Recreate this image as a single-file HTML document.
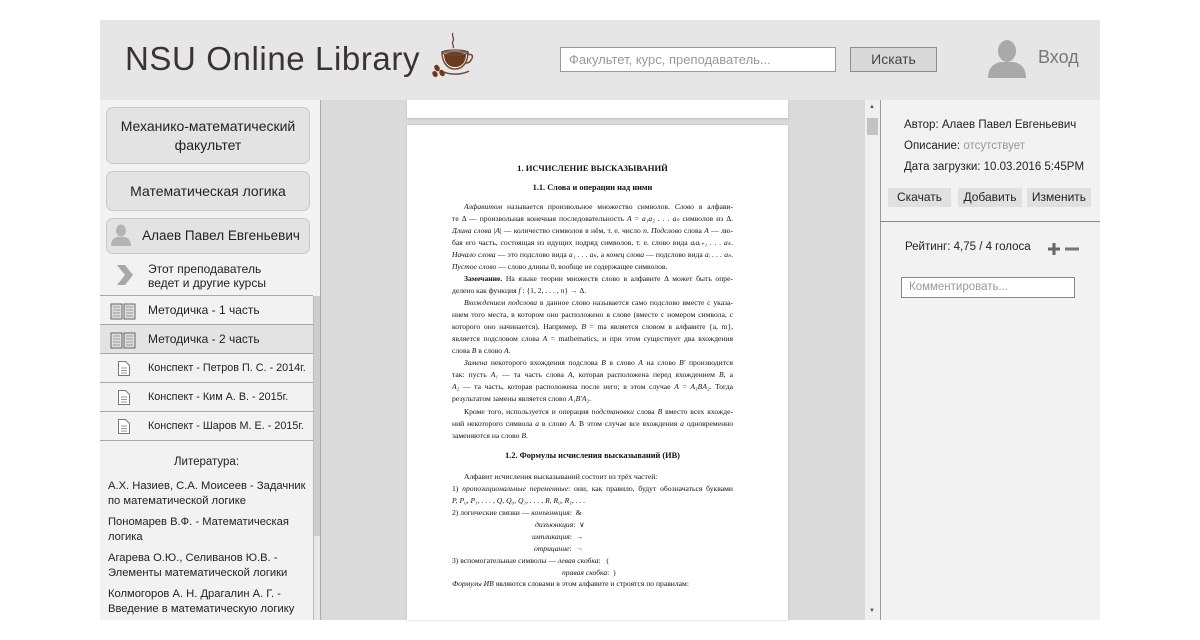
<!DOCTYPE html>
<html><head><meta charset="utf-8">
<style>
*{margin:0;padding:0;box-sizing:border-box}
body{width:1200px;height:640px;background:#fff;position:relative;overflow:hidden;font-family:"Liberation Sans","DejaVu Sans",sans-serif;color:#222}
.a{position:absolute}
#hdr{left:100px;top:20px;width:1000px;height:80px;background:#e6e6e6}
.btn{position:absolute;left:106px;width:204px;background:#e3e3e3;border:1px solid #c8c8c8;border-radius:7px;text-align:center;font-size:14px;color:#222}
.li{position:absolute;left:100px;width:213px;height:29px;border-bottom:1px solid #a8a8a8;background:#f2f2f2}
.dl{position:absolute;left:452px;width:281px;font-family:"Liberation Serif",serif;font-size:7.6px;color:#111;white-space:nowrap;line-height:10px;height:10px;overflow:hidden}
.j{text-align:justify;text-align-last:justify}
.rb{position:absolute;top:188px;height:19px;background:#e0e0e0;font-size:12px;line-height:19px;text-align:center;color:#222}
</style></head><body>
<div class="a" id="hdr"></div>
<div class="a" style="left:125px;top:37px;font-size:33px;color:#3b3333;letter-spacing:0.6px;line-height:44px">NSU Online Library</div>
<svg class="a" style="left:430px;top:30px" width="50" height="50" viewBox="0 0 50 50">
<path d="M23 3c-2 3 2 5 0 8s2 5 0 7" stroke="#6b4a35" stroke-width="1.3" fill="none"/>
<path d="M12 22c0 10 5 17 13 17s13-7 13-17z" fill="#fff" stroke="#6b4a35" stroke-width="1.5"/>
<path d="M14 24c0 8 4 13 11 13s11-5 11-13c-5-2-17-2-22 0z" fill="#6b3a1e"/>
<ellipse cx="25" cy="22.5" rx="13" ry="2.5" fill="none" stroke="#6b4a35" stroke-width="1.3"/>
<path d="M37 25c5-2 7 1 4 5-1 2-3 3-5 3" stroke="#6b4a35" stroke-width="1.5" fill="none"/>
<path d="M14 42c6 3 18 3 25-1" stroke="#6b4a35" stroke-width="1.5" fill="none"/>
<ellipse cx="7" cy="38" rx="2.5" ry="3.5" fill="#6b3a1e" transform="rotate(-30 7 38)"/>
<ellipse cx="12" cy="43" rx="2.5" ry="3.5" fill="#6b3a1e" transform="rotate(-30 12 43)"/>
<ellipse cx="5" cy="44" rx="2.5" ry="3.2" fill="#6b3a1e" transform="rotate(-30 5 44)"/>
</svg>
<div class="a" style="left:560px;top:47px;width:276px;height:25px;background:#fff;border:1px solid #9a9a9a;font-size:13px;color:#999;line-height:23px;padding-left:8px">Факультет, курс, преподаватель...</div>
<div class="a" style="left:850px;top:47px;width:87px;height:25px;background:#d9d9d9;border:1px solid #8e8e8e;font-size:14px;color:#444;line-height:23px;text-align:center">Искать</div>
<svg class="a" style="left:987px;top:38px" width="40" height="40" viewBox="0 0 40 40"><ellipse cx="20" cy="13" rx="9" ry="11" fill="#a9a9a9"/><path d="M1 40c0-10 5-14 12-16h14c7 2 12 6 12 16z" fill="#a9a9a9"/></svg>
<div class="a" style="left:1038px;top:47px;font-size:18px;color:#777">Вход</div>

<div class="a" style="left:100px;top:100px;width:220px;height:520px;background:#f2f2f2"></div>
<div class="btn" style="top:107px;height:57px;padding-top:9px;line-height:19px">Механико-математический<br>факультет</div>
<div class="btn" style="top:171px;height:40px;line-height:38px">Математическая логика</div>
<div class="btn" style="top:218px;height:36px;line-height:34px;padding-left:26px;font-size:13.5px">Алаев Павел Евгеньевич</div>
<svg class="a" style="left:111px;top:224px" width="20" height="22" viewBox="0 0 20 22"><ellipse cx="10" cy="6.5" rx="5" ry="6" fill="#b3b3b3"/><path d="M0 22c0-6 3-8 6-9h8c3 1 6 3 6 9z" fill="#b3b3b3"/></svg>
<svg class="a" style="left:115px;top:264px" width="20" height="22" viewBox="0 0 20 22"><path d="M2 1h8l8 10-8 10H2l8-10z" fill="#a8a8a8"/></svg>
<div class="a" style="left:148px;top:262px;font-size:12px;line-height:14px">Этот преподаватель<br>ведет и другие курсы</div>
<div class="a" style="left:100px;top:295px;width:213px;height:1px;background:#a8a8a8"></div>
<div class="li" style="top:296px"></div>
<div class="li" style="top:325px;background:#e3e3e3"></div>
<div class="li" style="top:354px"></div>
<div class="li" style="top:383px"></div>
<div class="li" style="top:412px"></div>
<div class="a" style="left:148px;top:302px;font-size:12px;line-height:16px">Методичка - 1 часть</div>
<div class="a" style="left:148px;top:331px;font-size:12px;line-height:16px">Методичка - 2 часть</div>
<div class="a" style="left:148px;top:360px;font-size:10.8px;line-height:16px">Конспект - Петров П. С. - 2014г.</div>
<div class="a" style="left:148px;top:389px;font-size:10.8px;line-height:16px">Конспект - Ким А. В. - 2015г.</div>
<div class="a" style="left:148px;top:418px;font-size:10.8px;line-height:16px">Конспект - Шаров М. Е. - 2015г.</div>
<svg class="a" style="left:110px;top:302px" width="26" height="18" viewBox="0 0 26 18"><g fill="#ddd" stroke="#666" stroke-width="1"><path d="M1 2h11v15H1zM14 2h11v15H14z"/></g><path d="M3 5h7M3 8h7M3 11h7M3 14h7M16 5h7M16 8h7M16 11h7M16 14h7" stroke="#999" stroke-width="1"/></svg>
<svg class="a" style="left:110px;top:331px" width="26" height="18" viewBox="0 0 26 18"><g fill="#ddd" stroke="#666" stroke-width="1"><path d="M1 2h11v15H1zM14 2h11v15H14z"/></g><path d="M3 5h7M3 8h7M3 11h7M3 14h7M16 5h7M16 8h7M16 11h7M16 14h7" stroke="#999" stroke-width="1"/></svg>
<svg class="a" style="left:117px;top:360px" width="14" height="17" viewBox="0 0 14 17"><path d="M1.5 1.5h7l4 4v10h-11z" fill="#fff" stroke="#777"/><path d="M4 8h6M4 10.5h6M4 13h6" stroke="#999"/></svg>
<svg class="a" style="left:117px;top:389px" width="14" height="17" viewBox="0 0 14 17"><path d="M1.5 1.5h7l4 4v10h-11z" fill="#fff" stroke="#777"/><path d="M4 8h6M4 10.5h6M4 13h6" stroke="#999"/></svg>
<svg class="a" style="left:117px;top:418px" width="14" height="17" viewBox="0 0 14 17"><path d="M1.5 1.5h7l4 4v10h-11z" fill="#fff" stroke="#777"/><path d="M4 8h6M4 10.5h6M4 13h6" stroke="#999"/></svg>
<div class="a" style="left:313px;top:296px;width:7px;height:324px;background:#e8e8e8;border-left:1px solid #bbb"></div>
<div class="a" style="left:314px;top:296px;width:6px;height:240px;background:#cdcdcd"></div>
<div class="a" style="left:100px;top:456px;width:213px;text-align:center;font-size:11.5px">Литература:</div>
<div class="a" style="left:108px;top:479px;font-size:11.2px;line-height:15px;color:#222">А.Х. Назиев, С.А. Моисеев - Задачник<br>по математической логике</div>
<div class="a" style="left:108px;top:515px;font-size:11.2px;line-height:15px">Пономарев В.Ф. - Математическая<br>логика</div>
<div class="a" style="left:108px;top:551px;font-size:11.2px;line-height:15px">Агарева О.Ю., Селиванов Ю.В. -<br>Элементы математической логики</div>
<div class="a" style="left:108px;top:587px;font-size:11.2px;line-height:15px">Колмогоров А. Н. Драгалин А. Г. -<br>Введение в математическую логику</div>

<div class="a" style="left:320px;top:100px;width:545px;height:520px;background:#dadada;border-left:1px solid #aaa"></div>
<div class="a" style="left:407px;top:100px;width:381px;height:18px;background:#fff;box-shadow:0 1px 2px #bbb"></div>
<div class="a" style="left:407px;top:125px;width:381px;height:495px;background:#fff;box-shadow:0 0 2px #bbb"></div>
<div class="a" style="left:865px;top:100px;width:15px;height:520px;background:#f0f0f0"></div>
<div class="a" style="left:867px;top:118px;width:11px;height:17px;background:#c2c2c2"></div>
<div class="a" style="left:869px;top:104px;font-size:6px;color:#555">▲</div>
<div class="a" style="left:869px;top:608px;font-size:6px;color:#555">▼</div>

<div class="dl" style="top:163px;text-align:center;font-weight:bold;font-size:8.6px">1. ИСЧИСЛЕНИЕ ВЫСКАЗЫВАНИЙ</div>
<div class="dl" style="top:183px;text-align:center;font-weight:bold;font-size:8.3px">1.1. Слова и операции над ними</div>
<div class="dl j" style="top:202px;padding-left:12px"><i>Алфавитом</i> называется произвольное множество символов. <i>Слово</i> в алфави-</div>
<div class="dl j" style="top:214px">те Δ — произвольная конечная последовательность <i>A</i> = <i>a₁a₂ . . . aₙ</i> символов из Δ.</div>
<div class="dl j" style="top:226px"><i>Длина слова</i> |<i>A</i>| — количество символов в нём, т. е. число <i>n</i>. <i>Подслово</i> слова <i>A</i> — лю-</div>
<div class="dl j" style="top:238px">бая его часть, состоящая из идущих подряд символов, т. е. слово вида <i>aᵢaᵢ₊₁ . . . aₖ</i>.</div>
<div class="dl j" style="top:250px"><i>Начало слова</i> — это подслово вида <i>a₁ . . . aₖ</i>, а <i>конец слова</i> — подслово вида <i>aᵢ . . . aₙ</i>.</div>
<div class="dl" style="top:262px"><i>Пустое слово</i> — слово длины 0, вообще не содержащее символов.</div>
<div class="dl j" style="top:274px;padding-left:12px"><b>Замечание.</b> На языке теории множеств слово в алфавите Δ может быть опре-</div>
<div class="dl" style="top:286px">делено как функция <i>f</i> : {1, 2, . . . , <i>n</i>} → Δ.</div>
<div class="dl j" style="top:298px;padding-left:12px"><i>Вхождением подслова</i> в данное слово называется само подслово вместе с указа-</div>
<div class="dl j" style="top:310px">нием того места, в котором оно расположено в слове (вместе с номером символа, с</div>
<div class="dl j" style="top:322px">которого оно начинается). Например, <i>B</i> = ma является словом в алфавите {a, m},</div>
<div class="dl j" style="top:334px">является подсловом слова <i>A</i> = mathematics, и при этом существует два вхождения</div>
<div class="dl" style="top:346px">слова <i>B</i> в слово <i>A</i>.</div>
<div class="dl j" style="top:358px;padding-left:12px"><i>Замена</i> некоторого вхождения подслова <i>B</i> в слово <i>A</i> на слово <i>B′</i> производится</div>
<div class="dl j" style="top:370px">так: пусть <i>A₁</i> — та часть слова <i>A</i>, которая расположена перед вхождением <i>B</i>, а</div>
<div class="dl j" style="top:382px"><i>A₂</i> — та часть, которая расположена после него; в этом случае <i>A</i> = <i>A₁BA₂</i>. Тогда</div>
<div class="dl" style="top:394px">результатом замены является слово <i>A₁B′A₂</i>.</div>
<div class="dl j" style="top:407px;padding-left:12px">Кроме того, используется и операция <i>подстановки</i> слова <i>B</i> вместо всех вхожде-</div>
<div class="dl j" style="top:419px">ний некоторого символа <i>a</i> в слово <i>A</i>. В этом случае все вхождения <i>a</i> одновременно</div>
<div class="dl" style="top:431px">заменяются на слово <i>B</i>.</div>
<div class="dl" style="top:451px;text-align:center;font-weight:bold;font-size:8.3px">1.2. Формулы исчисления высказываний (ИВ)</div>
<div class="dl" style="top:472px;padding-left:12px">Алфавит исчисления высказываний состоит из трёх частей:</div>
<div class="dl j" style="top:484px">1) <i>пропозициональные переменные</i>: они, как правило, будут обозначаться буквами</div>
<div class="dl" style="top:496px"><i>P, P₀, P₁, . . . , Q, Q₀, Q₁, . . . , R, R₀, R₁, . . .</i></div>
<div class="dl" style="top:508px">2) логические связки — <i>конъюнкция</i>: &nbsp;&amp;</div>
<div class="dl" style="top:520px;padding-left:83px"><i>дизъюнкция</i>: &nbsp;∨</div>
<div class="dl" style="top:532px;padding-left:80px"><i>импликация</i>: &nbsp;→</div>
<div class="dl" style="top:544px;padding-left:82px"><i>отрицание</i>: &nbsp;&nbsp;¬</div>
<div class="dl" style="top:556px">3) вспомогательные символы — <i>левая скобка</i>: &nbsp;&nbsp;(</div>
<div class="dl" style="top:568px;padding-left:110px"><i>правая скобка</i>: &nbsp;)</div>
<div class="dl" style="top:579px"><i>Формулы ИВ</i> являются словами в этом алфавите и строятся по правилам:</div>

<div class="a" style="left:880px;top:100px;width:220px;height:520px;background:#f2f2f2;border-left:1px solid #999"></div>
<div class="a" style="left:904px;top:115px;font-size:11.5px;line-height:21px;color:#222">Автор: Алаев Павел Евгеньевич<br>Описание: <span style="color:#999">отсутствует</span><br>Дата загрузки: 10.03.2016 5:45PM</div>
<div class="rb" style="left:888px;width:63px">Скачать</div>
<div class="rb" style="left:958px;width:64px">Добавить</div>
<div class="rb" style="left:1027px;width:64px">Изменить</div>
<div class="a" style="left:881px;top:221px;width:219px;height:1px;background:#888"></div>
<div class="a" style="left:905px;top:241px;font-size:11.5px;color:#222">Рейтинг: 4,75 / 4 голоса</div>
<svg class="a" style="left:1047px;top:242px" width="34" height="14" viewBox="0 0 34 14"><path d="M5.5 1h3v4.5H13v3H8.5V13h-3V8.5H1v-3h4.5z" fill="#666"/><rect x="18" y="5.5" width="14" height="3" fill="#777"/></svg>
<div class="a" style="left:901px;top:277px;width:174px;height:21px;background:#fff;border:1px solid #888;font-size:11.5px;color:#999;line-height:19px;padding-left:7px">Комментировать...</div>
</body></html>
